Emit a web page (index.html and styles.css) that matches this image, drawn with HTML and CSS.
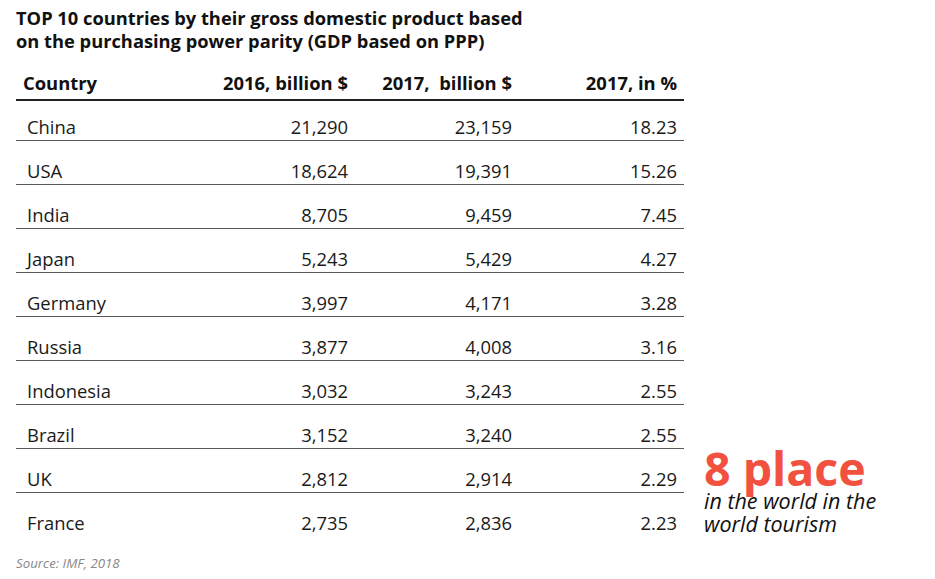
FILE: index.html
```html
<!DOCTYPE html>
<html>
<head>
<meta charset="utf-8">
<link rel="stylesheet" href="styles.css">
</head>
<body>
<div class="page">
  <h1 class="title">TOP 10 countries by their gross domestic product based<br>on the purchasing power parity (GDP based on PPP)</h1>
  <div class="content">
    <table class="gdp">
      <colgroup>
        <col class="c1"><col class="c2"><col class="c3"><col class="c4">
      </colgroup>
      <thead>
        <tr><th class="name">Country</th><th>2016, billion $</th><th>2017,&nbsp; billion $</th><th class="last">2017, in %</th></tr>
      </thead>
      <tbody>
        <tr class="first"><td class="name">China</td><td>21,290</td><td>23,159</td><td class="last">18.23</td></tr>
        <tr><td class="name">USA</td><td>18,624</td><td>19,391</td><td class="last">15.26</td></tr>
        <tr><td class="name">India</td><td>8,705</td><td>9,459</td><td class="last">7.45</td></tr>
        <tr><td class="name">Japan</td><td>5,243</td><td>5,429</td><td class="last">4.27</td></tr>
        <tr><td class="name">Germany</td><td>3,997</td><td>4,171</td><td class="last">3.28</td></tr>
        <tr><td class="name">Russia</td><td>3,877</td><td>4,008</td><td class="last">3.16</td></tr>
        <tr><td class="name">Indonesia</td><td>3,032</td><td>3,243</td><td class="last">2.55</td></tr>
        <tr><td class="name">Brazil</td><td>3,152</td><td>3,240</td><td class="last">2.55</td></tr>
        <tr><td class="name">UK</td><td>2,812</td><td>2,914</td><td class="last">2.29</td></tr>
        <tr class="final"><td class="name">France</td><td>2,735</td><td>2,836</td><td class="last">2.23</td></tr>
      </tbody>
    </table>
    <div class="aside">
      <div class="rank">8 place</div>
      <div class="rank-note">in the world in the<br>world tourism</div>
    </div>
  </div>
  <div class="source">Source: IMF, 2018</div>
</div>
</body>
</html>
```

FILE: styles.css
```css
html, body {
  margin: 0;
  padding: 0;
  background: #ffffff;
}
body {
  font-family: "Open Sans", "Liberation Sans", sans-serif;
  color: #1a1a1a;
}
.page {
  padding: 6px 0 0 16px;
}
.title {
  margin: 0;
  font-size: 18.3px;
  line-height: 23px;
  font-weight: 700;
  color: #111;
}
.content {
  display: flex;
  align-items: flex-end;
  margin-top: 18px;
}
.gdp {
  width: 668px;
  border-collapse: collapse;
  table-layout: fixed;
  font-size: 18.4px;
  line-height: 25px;
}
.c1 { width: 180px; }
.c2 { width: 152px; }
.c3 { width: 164px; }
.c4 { width: 172px; }
.gdp th {
  font-weight: 700;
  text-align: right;
  padding: 0 0 4px 0;
  border-bottom: 2px solid #222;
  color: #111;
  white-space: nowrap;
}
.gdp th.name {
  text-align: left;
  padding-left: 7px;
}
.gdp td {
  text-align: right;
  padding: 17px 0 1px 0;
  border-bottom: 1px solid #5a5a5a;
  white-space: nowrap;
}
.gdp tr.first td {
  padding-top: 13px;
  padding-bottom: 1px;
}
.gdp tr.final td {
  border-bottom: none;
}
.gdp td.name {
  text-align: left;
  padding-left: 11px;
}
.gdp .last {
  padding-right: 7px;
}
.aside {
  margin-left: 20px;
  margin-bottom: 1px;
}
.rank {
  font-size: 46.5px;
  line-height: 40px;
  font-weight: 700;
  color: #f2513f;
  margin-bottom: 1px;
}
.rank-note {
  font-size: 21.5px;
  line-height: 23px;
  font-style: italic;
  color: #111;
}
.source {
  margin-top: 18px;
  font-size: 13.3px;
  line-height: 18px;
  font-style: italic;
  color: #888;
}
```
